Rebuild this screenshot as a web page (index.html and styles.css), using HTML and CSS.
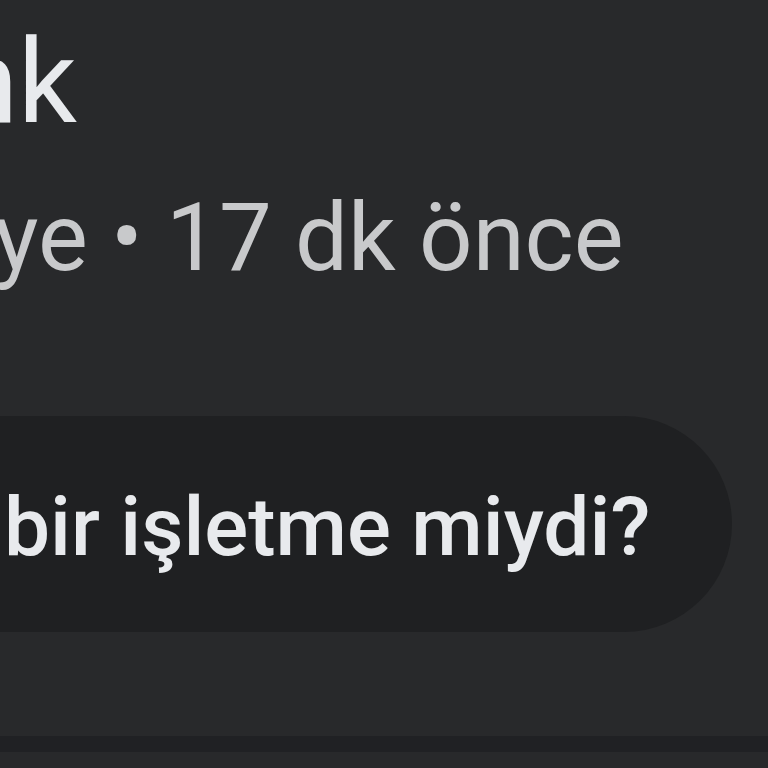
FILE: index.html
```html
<!DOCTYPE html>
<html lang="tr">
<head>
    <meta charset="UTF-8">
    <meta name="viewport" content="width=device-width, initial-scale=1.0">
    <title>Yorum</title>
    <link rel="stylesheet" href="styles.css">
</head>
<body>
<div class="app">
    <div class="review">
        <div class="author">nk</div>
        <div class="meta">ye &bull; 17 dk önce</div>
    </div>
    <div class="question">
        <span class="question-text">bir işletme miydi?</span>
    </div>
    <div class="divider"></div>
</div>
</body>
</html>
```

FILE: styles.css
```css
html,
body {
    width: 100%;
    height: 100%;
    margin: 0;
    padding: 0;
    overflow: hidden;
    background: #28292b;
}

.app {
    height: 100%;
    font-family: Roboto, "Noto Sans", Arial, sans-serif;
    overflow: hidden;
}

.review {
    padding-top: 24px;
}

.author {
    margin-left: -46px;
    font-size: 116px;
    line-height: 1;
    color: #e8eaed;
    white-space: nowrap;
}

.meta {
    margin-top: 51px;
    margin-left: -6px;
    font-size: 94px;
    line-height: 1;
    color: #c8c9cb;
    white-space: nowrap;
}

.question {
    display: flex;
    align-items: center;
    width: 832px;
    height: 216px;
    margin-top: 131px;
    margin-left: -100px;
    padding-left: 104px;
    box-sizing: border-box;
    border-radius: 0 108px 108px 0;
    background: #1f2022;
}

.question-text {
    padding-top: 6px;
    font-size: 82px;
    font-weight: 500;
    color: #e8eaed;
    white-space: nowrap;
}

.divider {
    height: 16px;
    margin-top: 104px;
    background: #202124;
}
```
